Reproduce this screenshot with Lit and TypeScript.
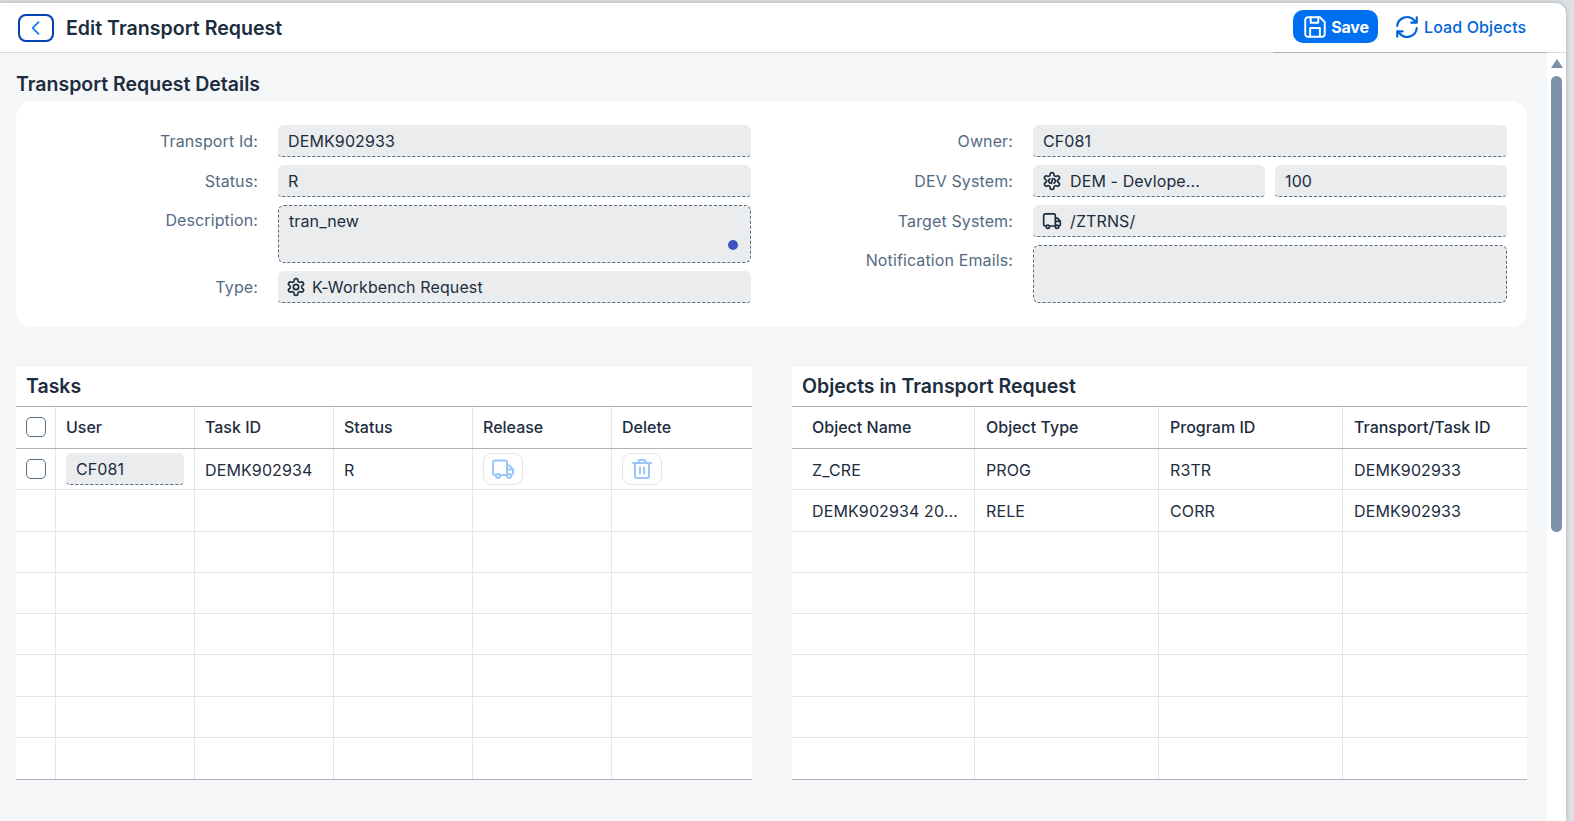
import { css, html, LitElement, svg } from "lit";
import { customElement } from "lit/decorators.js";

const gear = svg`<path d="M12.220 2h-.44a2 2 0 0 0-2 2v.18a2 2 0 0 1-1 1.730l-.43.25a2 2 0 0 1-2 0l-.15-.08a2 2 0 0 0-2.730.73l-.22.38a2 2 0 0 0 .73 2.730l.15.1a2 2 0 0 1 1 1.720v.51a2 2 0 0 1-1 1.740l-.15.09a2 2 0 0 0-.73 2.730l.22.38a2 2 0 0 0 2.730.73l.15-.08a2 2 0 0 1 2 0l.43.25a2 2 0 0 1 1 1.730V20a2 2 0 0 0 2 2h.44a2 2 0 0 0 2-2v-.18a2 2 0 0 1 1-1.730l.43-.25a2 2 0 0 1 2 0l.15.08a2 2 0 0 0 2.730-.73l.22-.39a2 2 0 0 0-.73-2.730l-.15-.08a2 2 0 0 1-1-1.740v-.5a2 2 0 0 1 1-1.740l.15-.09a2 2 0 0 0 .73-2.730l-.22-.38a2 2 0 0 0-2.730-.73l-.15.08a2 2 0 0 1-2 0l-.43-.25a2 2 0 0 1-1-1.730V4a2 2 0 0 0-2-2z"/>`;
const icons = {
  back: svg`<path d="M15 5l-7 7 7 7"/>`,
  save: svg`<path d="M5.500 3h11L21 7.500v11a2.500 2.500 0 0 1-2.500 2.500h-13A2.500 2.500 0 0 1 3 18.500v-13A2.500 2.500 0 0 1 5.500 3z"/><path d="M8 3v5h7V3M7.500 21v-8h9v8"/>`,
  refresh: svg`<path d="M3 11a9 9 0 0 1 15.600-5.200L21 8M21 3v5h-5M21 13a9 9 0 0 1-15.600 5.200L3 16M3 21v-5h5"/>`,
  truck: svg`<path d="M4.500 18H4a2 2 0 0 1-2-2V5.500a2 2 0 0 1 2-2h10a2 2 0 0 1 2 2V18H9.500M16 8.500h2.500L22 12.500V16a2 2 0 0 1-1.500 2M16 12.500h6"/><circle cx="7" cy="19" r="2"/><circle cx="18" cy="19" r="2"/>`,
  trash: svg`<path d="M3 6h18M8.500 6V4.500A1.500 1.500 0 0 1 10 3h4a1.500 1.500 0 0 1 1.500 1.500V6M5 6v13a2 2 0 0 0 2 2h10a2 2 0 0 0 2-2V6M10 10.500v6M14 10.500v6"/>`,
  gear: svg`${gear}<circle cx="12" cy="12" r="3.200"/>`,
  gearCode: svg`${gear}<path d="M9.500 9.500L7.300 12l2.200 2.500M14.500 9.500l2.200 2.500-2.200 2.500M12.800 9l-1.600 6"/>`,
};
type IconName = keyof typeof icons;

const taskCols = "40px 139px 139px 139px 139px 140px";
const objectCols = "183px 184px 184px 184px";

@customElement("app-root")
class AppRoot extends LitElement {
  icon(name: IconName, cls = "") {
    return html`<svg class="icon ${cls}" viewBox="0 0 24 24">${icons[name]}</svg>`;
  }

  field(value: string, icon?: IconName, cls = "") {
    return html`<div class="field ${cls}">${icon ? this.icon(icon) : ""}<span>${value}</span></div>`;
  }

  row(label: string, content: unknown, cls = "") {
    return html`<label class="label ${cls}">${label}:</label>${content}`;
  }

  taskRow(cells?: boolean) {
    return html`<div class="row" style="grid-template-columns:${taskCols}">
      <div class="cell">${cells ? html`<span class="check"></span>` : ""}</div>
      <div class="cell">${cells ? html`<div class="field user"><span>CF081</span></div>` : ""}</div>
      <div class="cell text">${cells ? "DEMK902934" : ""}</div>
      <div class="cell text">${cells ? "R" : ""}</div>
      <div class="cell">${cells ? html`<button class="action">${this.icon("truck")}</button>` : ""}</div>
      <div class="cell">${cells ? html`<button class="action">${this.icon("trash")}</button>` : ""}</div>
    </div>`;
  }

  objectRow(values: string[]) {
    return html`<div class="row" style="grid-template-columns:${objectCols}">
      ${values.map((v) => html`<div class="cell wide text">${v}</div>`)}
    </div>`;
  }

  render() {
    const objects = [
      ["Z_CRE", "PROG", "R3TR", "DEMK902933"],
      ["DEMK902934 20...", "RELE", "CORR", "DEMK902933"],
      ...Array.from({ length: 6 }, () => ["", "", "", ""]),
    ];
    return html`
      <div class="panel">
        <header class="bar">
          <button class="back">${this.icon("back")}</button>
          <h1>Edit Transport Request</h1>
          <div class="actions">
            <button class="save">${this.icon("save")}Save</button>
            <button class="load">${this.icon("refresh")}Load Objects</button>
          </div>
        </header>
        <div class="body">
          <main>
            <h2>Transport Request Details</h2>
            <section class="card">
              <div class="form">
                ${this.row("Transport Id", this.field("DEMK902933"))}
                ${this.row("Status", this.field("R"))}
                ${this.row("Description", html`<div class="area"><span>tran_new</span><i class="dot"></i></div>`, "top")}
                ${this.row("Type", this.field("K-Workbench Request", "gear", "tight"))}
              </div>
              <div class="form right">
                ${this.row("Owner", this.field("CF081"))}
                ${this.row(
                  "DEV System",
                  html`<div class="pair">${this.field("DEM - Devlope...", "gearCode", "roomy")}${this.field("100")}</div>`
                )}
                ${this.row("Target System", this.field("/ZTRNS/", "truck", "roomy"))}
                ${this.row("Notification Emails", html`<div class="area"></div>`, "top")}
              </div>
            </section>
            <div class="tables">
              <section class="table">
                <h3>Tasks</h3>
                <div class="row head" style="grid-template-columns:${taskCols}">
                  <div class="cell"><span class="check"></span></div>
                  ${["User", "Task ID", "Status", "Release", "Delete"].map((h) => html`<div class="cell">${h}</div>`)}
                </div>
                ${this.taskRow(true)}
                ${Array.from({ length: 7 }, () => this.taskRow())}
              </section>
              <section class="table">
                <h3 class="objects">Objects in Transport Request</h3>
                <div class="row head" style="grid-template-columns:${objectCols}">
                  ${["Object Name", "Object Type", "Program ID", "Transport/Task ID"].map(
                    (h) => html`<div class="cell wide">${h}</div>`
                  )}
                </div>
                ${objects.map((o) => this.objectRow(o))}
              </section>
            </div>
          </main>
          <aside class="scroll">
            <div class="arrow"></div>
            <div class="thumb"></div>
          </aside>
        </div>
      </div>
    `;
  }

  static styles = css`
    :host {
      display: block;
      height: 821px;
      overflow: hidden;
      box-sizing: border-box;
      padding: 3px 8px 0 0;
      background: #dde0e4;
      font-family: Inter, "Noto Sans", sans-serif;
      font-size: 16px;
      letter-spacing: 0.12px;
      color: #1d2d3e;
    }
    * {
      box-sizing: border-box;
    }
    .panel {
      height: 100%;
      display: flex;
      flex-direction: column;
      background: #fff;
      border-radius: 0 10px 0 0;
      box-shadow: 0 0 4px rgba(60, 75, 90, 0.35);
    }
    .icon {
      width: 20px;
      height: 20px;
      flex: none;
      fill: none;
      stroke: currentColor;
      stroke-width: 2;
      stroke-linecap: round;
      stroke-linejoin: round;
    }
    button {
      font: inherit;
      letter-spacing: inherit;
      background: none;
      border: 0;
      padding: 0;
      display: flex;
      align-items: center;
      justify-content: center;
    }
    .bar {
      height: 50px;
      flex: none;
      display: flex;
      align-items: center;
      padding: 0 19px 0 18px;
      border-bottom: 1px solid #d9dcdf;
    }
    .back {
      width: 36px;
      height: 28px;
      margin-top: 1px;
      border: 2px solid #0040b0;
      border-radius: 8px;
      color: #0070f2;
    }
    h1 {
      margin: 0 0 0 12px;
      font-size: 19.600px;
      font-weight: 600;
      letter-spacing: 0;
    }
    .actions {
      margin-left: auto;
      width: 274px;
      height: 50px;
      margin-bottom: -1px;
      display: flex;
      align-items: center;
      padding: 0 0 2px 20px;
      border-bottom: 1px solid #a9b4be;
      align-self: flex-start;
    }
    .save {
      width: 85px;
      height: 33px;
      gap: 3px;
      background: #0070f2;
      color: #fff;
      border-radius: 10px;
      font-weight: 700;
      letter-spacing: -0.2px;
    }
    .save .icon {
      width: 26px;
      height: 26px;
      stroke-width: 1.800;
    }
    .load {
      margin-left: 16px;
      gap: 4px;
      color: #0064d9;
      font-weight: 500;
    }
    .load .icon {
      width: 26px;
      height: 26px;
      stroke-width: 2;
    }
    .body {
      flex: 1;
      display: flex;
      min-height: 0;
    }
    main {
      width: 1547px;
      flex: none;
      padding: 19px 20px 0 16px;
      background: #f5f6f7;
    }
    h2 {
      margin: 0;
      height: 29px;
      font-size: 19.500px;
      font-weight: 600;
      line-height: 24px;
      letter-spacing: 0;
    }
    .card {
      height: 226px;
      display: grid;
      grid-template-columns: 735px 756px;
      padding: 24px 20px 0 0;
      background: #fff;
      border-radius: 16px;
    }
    .form {
      display: grid;
      grid-template-columns: 242px 473px;
      column-gap: 20px;
      row-gap: 8px;
      align-content: start;
    }
    .form.right {
      grid-template-columns: 262px 474px;
    }
    .label {
      text-align: right;
      color: #556b82;
      line-height: 32px;
      white-space: nowrap;
    }
    .label.top {
      line-height: 30px;
    }
    .field {
      height: 32px;
      display: flex;
      align-items: center;
      gap: 6px;
      padding: 0 10px;
      background: #eaecee;
      border-radius: 6px 6px 4px 4px;
      border-bottom: 1px dashed #556b82;
      white-space: nowrap;
    }
    .field .icon {
      width: 20px;
      height: 20px;
      stroke-width: 2;
    }
    .field.tight {
      padding-left: 8px;
    }
    .field.roomy {
      padding-left: 9px;
      gap: 8px;
    }
    .pair {
      display: grid;
      grid-template-columns: 232px 232px;
      gap: 10px;
    }
    .area {
      position: relative;
      height: 58px;
      padding: 5px 10px;
      background: #eaecee;
      border: 1px dashed #556b82;
      border-radius: 6px;
    }
    .dot {
      position: absolute;
      right: 12px;
      bottom: 12px;
      width: 10px;
      height: 10px;
      border-radius: 50%;
      background: #3f51bf;
    }
    .tables {
      margin-top: 40px;
      display: grid;
      grid-template-columns: 736px 735px;
      column-gap: 40px;
    }
    .table {
      background: #fff;
      border-bottom: 1px solid #a9b4be;
    }
    h3 {
      margin: 0;
      height: 39px;
      padding-left: 10px;
      font-size: 19.500px;
      font-weight: 600;
      line-height: 38px;
      letter-spacing: 0;
    }
    .row {
      display: grid;
      height: 41.300px;
      border-bottom: 1px solid #e5e5e5;
    }
    .row:last-child {
      border-bottom: 0;
    }
    .head {
      height: 43px;
      padding-bottom: 2px;
      border-top: 1px solid #a9b4be;
      border-bottom-color: #a9b4be;
      font-weight: 500;
      letter-spacing: 0;
    }
    .head .cell {
      margin-bottom: -2px;
      padding-bottom: 2px;
    }
    .cell {
      display: flex;
      align-items: center;
      padding-left: 10px;
      border-right: 1px solid #e5e5e5;
      white-space: nowrap;
      min-width: 0;
    }
    .cell:last-child {
      border-right: 0;
    }
    .cell.text {
      padding-top: 2px;
    }
    .cell.wide {
      padding-left: 20px;
    }
    .cell.wide + .cell.wide {
      padding-left: 11px;
    }
    .check {
      width: 20px;
      height: 20px;
      border: 1px solid #556b82;
      border-radius: 5px;
      background: #fff;
    }
    .user {
      width: 118px;
    }
    .action {
      width: 40px;
      height: 32px;
      border: 1px solid #e5e5e5;
      border-radius: 9px;
      color: #99c5fa;
    }
    .action .icon {
      width: 24px;
      height: 24px;
    }
    .scroll {
      flex: 1;
      padding-top: 6px;
      background: #fff;
      display: flex;
      flex-direction: column;
      align-items: center;
    }
    .arrow {
      width: 0;
      height: 0;
      border-left: 6.500px solid transparent;
      border-right: 6.500px solid transparent;
      border-bottom: 9px solid #7d91a8;
    }
    .thumb {
      width: 11px;
      height: 456px;
      margin-top: 8px;
      border-radius: 6px;
      background: #7d91a8;
    }
  `;
}
